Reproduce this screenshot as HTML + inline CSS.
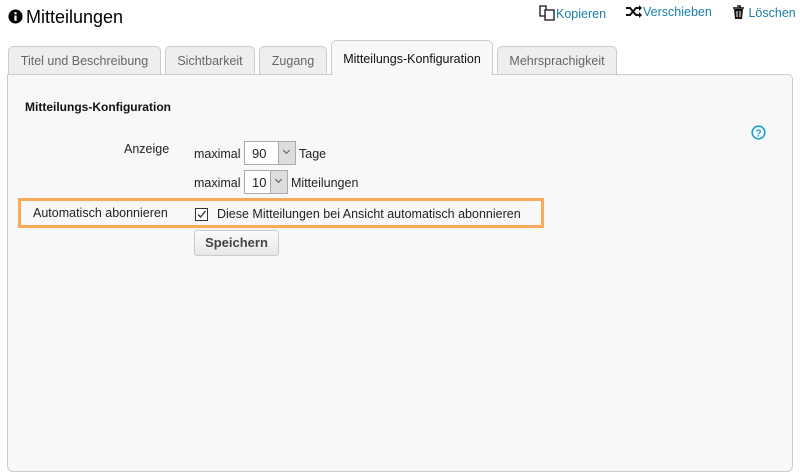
<!DOCTYPE html>
<html><head><meta charset="utf-8"><style>
*{box-sizing:border-box}
body{margin:0;width:800px;height:476px;background:#fff;font-family:"Liberation Sans",Arial,sans-serif;font-size:12.5px;color:#222;position:relative;overflow:hidden}
.abs{position:absolute}
h1{position:absolute;left:8px;top:7px;margin:0;font-weight:normal;font-size:18px;color:#000}
.act{position:absolute;top:5px;color:#1a7fa8;font-size:12.5px}
.tab{position:absolute;top:46px;height:29px;background:#eee;border:1px solid #ccc;border-bottom:none;border-radius:5px 5px 0 0;color:#666;font-size:12.5px;text-align:center;line-height:28px}
.tab.a{top:40px;height:35px;background:#f8f8f8;color:#111;line-height:36px;z-index:2}
.panel{position:absolute;left:7px;top:74px;width:786px;height:398px;background:#f8f8f8;border:1px solid #ccc;border-radius:0 5px 6px 6px}
.sel{position:absolute;height:24px;background:#fff;border:1px solid #aaa}
.sel span{position:absolute;left:7px;top:4px;font-size:13px}
.sel i{position:absolute;right:0;top:0;width:17px;height:22px;background:#ddd;border-left:1px solid #aaa}
.sel i:after{content:"";position:absolute;left:5px;top:6px;width:4px;height:4px;border-right:1px solid #555;border-bottom:1px solid #555;transform:rotate(45deg)}
</style></head><body>
<h1><svg width="15" height="15" viewBox="0 0 16 16" style="vertical-align:-1px;margin-right:3px"><circle cx="8" cy="8" r="7.5" fill="#000"/><circle cx="8" cy="4.5" r="1.3" fill="#fff"/><rect x="6.8" y="7" width="2.4" height="5.5" fill="#fff"/></svg>Mitteilungen</h1>
<div class="act" style="left:539px"><svg width="17" height="16" viewBox="0 0 17 16" style="vertical-align:-3px"><path d="M1 1h6v10H1z" fill="none" stroke="#111" stroke-width="1.3"/><path d="M6 5h9v10H6z" fill="#fff" stroke="#111" stroke-width="1.3"/></svg>Kopieren</div>
<div class="act" style="left:625px"><svg width="18" height="13" viewBox="0 0 18 13" style="vertical-align:-2px"><path d="M1 3h4l6 7h4M1 10h4l6-7h4" fill="none" stroke="#111" stroke-width="2"/><path d="M14 0l3 3-3 3zM14 7l3 3-3 3z" fill="#111"/></svg>Verschieben</div>
<div class="act" style="left:732px"><svg width="13" height="15" viewBox="0 0 13 15" style="vertical-align:-3px"><path d="M1 3h11M5 1h3v2" fill="none" stroke="#111" stroke-width="1.6"/><path d="M2 4h9l-1 10H3z" fill="#111"/><path d="M5 6v6M8 6v6" stroke="#fff" stroke-width="1"/></svg> Löschen</div>
<div class="tab" style="left:8px;width:153px">Titel und Beschreibung</div>
<div class="tab" style="left:165px;width:90px">Sichtbarkeit</div>
<div class="tab" style="left:259px;width:68px">Zugang</div>
<div class="tab a" style="left:331px;width:162px">Mitteilungs-Konfiguration</div>
<div class="tab" style="left:497px;width:120px">Mehrsprachigkeit</div>
<div class="panel"></div>
<div class="abs" style="left:25px;top:100px;font-weight:bold;color:#111;font-size:12px">Mitteilungs-Konfiguration</div>
<svg class="abs" style="left:751px;top:125px" width="15" height="15" viewBox="0 0 15 15"><circle cx="7.5" cy="7.5" r="6.3" fill="none" stroke="#1aa0c8" stroke-width="1.6"/><text x="7.5" y="11.3" font-size="10" font-weight="bold" text-anchor="middle" fill="#1aa0c8" font-family="Liberation Sans">?</text></svg>
<div class="abs" style="left:124px;top:142px">Anzeige</div>
<div class="abs" style="left:194px;top:147px">maximal</div>
<div class="sel" style="left:244px;top:141px;width:52px"><span>90</span><i></i></div>
<div class="abs" style="left:299px;top:147px">Tage</div>
<div class="abs" style="left:194px;top:176px">maximal</div>
<div class="sel" style="left:244px;top:170px;width:44px"><span>10</span><i></i></div>
<div class="abs" style="left:291px;top:176px">Mitteilungen</div>
<div class="abs" style="left:18px;top:198px;width:526px;height:30px;border:3px solid #fbaa5c"></div>
<div class="abs" style="left:33px;top:206px">Automatisch abonnieren</div>
<div class="abs" style="left:195px;top:208px;width:13px;height:13px;border:1px solid #333;background:#fff"><svg width="11" height="11" viewBox="0 0 11 11"><path d="M2 5.5l2.5 2.5 5-6" fill="none" stroke="#333" stroke-width="1.3"/></svg></div>
<div class="abs" style="left:217px;top:207px">Diese Mitteilungen bei Ansicht automatisch abonnieren</div>
<div class="abs" style="left:194px;top:230px;width:85px;height:26px;border:1px solid #ccc;border-radius:3px;background:linear-gradient(#fafafa,#e8e8e8);font-weight:bold;color:#444;font-size:13px;text-align:center;line-height:24px">Speichern</div>
</body></html>
